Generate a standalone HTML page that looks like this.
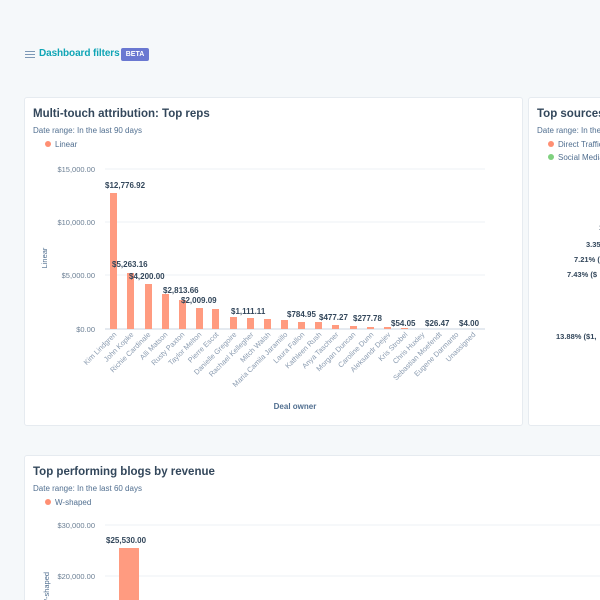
<!DOCTYPE html>
<html style="overflow:hidden;width:600px;height:600px"><head><style>
body{margin:0;width:600px;height:600px;overflow:hidden;background:#f5f8fa;font-family:"Liberation Sans",sans-serif;position:relative}
.card{position:absolute;background:#fff;border:1px solid #e6ebf0;border-radius:3px;overflow:hidden}
.t{position:absolute;white-space:nowrap}
</style></head><body>
<svg class="t" style="left:25px;top:50px" width="10" height="9" viewBox="0 0 10 9"><g stroke="#7c98b6" stroke-width="1"><line x1="0" y1="1.5" x2="10" y2="1.5"/><line x1="0" y1="4.5" x2="10" y2="4.5"/><line x1="0" y1="7.5" x2="10" y2="7.5"/></g></svg>
<div class="t" style="left:39px;top:48px;font-size:10px;font-weight:bold;color:#0fa5b5;letter-spacing:-0.1px">Dashboard filters</div>
<div class="t" style="left:121px;top:48px;width:28px;height:13px;background:#6a78d1;border-radius:2px;color:#fff;font-size:7px;font-weight:bold;text-align:center;line-height:13px">BETA</div>

<div class="card" style="left:24px;top:97px;width:497px;height:327px">
<svg width="497" height="327" style="position:absolute;left:0;top:0;font-family:'Liberation Sans',sans-serif">
<text x="8" y="19" font-size="11.5" font-weight="bold" fill="#33475b">Multi-touch attribution: Top reps</text>
<text x="8" y="35" font-size="8" fill="#516f90">Date range: In the last 90 days</text>
<circle cx="23" cy="46" r="3" fill="#ff8f73"/><text x="30" y="49" font-size="8" fill="#516f90">Linear</text>
<g font-size="7.5" fill="#6b7f94" text-anchor="end"><text x="70" y="74">$15,000.00</text><text x="70" y="127">$10,000.00</text><text x="70" y="180">$5,000.00</text><text x="70" y="234">$0.00</text></g>
<g stroke="#eef2f6"><line x1="80" y1="71" x2="460" y2="71"/><line x1="80" y1="124" x2="460" y2="124"/><line x1="80" y1="177" x2="460" y2="177"/></g>
<line x1="80" y1="231" x2="460" y2="231" stroke="#cbd6e2"/>
<text transform="translate(22,160) rotate(-90)" font-size="7.5" fill="#516f90" text-anchor="middle">Linear</text>
<g fill="#ff9b80">
<rect x="85" y="95" width="7" height="136"/><rect x="102" y="175" width="7" height="56"/><rect x="120" y="186" width="7" height="45"/><rect x="137" y="196" width="7" height="35"/><rect x="154" y="202" width="7" height="29"/><rect x="171" y="210" width="7" height="21"/><rect x="187" y="211" width="7" height="20"/><rect x="205" y="219" width="7" height="12"/><rect x="222" y="220" width="7" height="11"/><rect x="239" y="221" width="7" height="10"/><rect x="256" y="222" width="7" height="9"/><rect x="273" y="224" width="7" height="7"/><rect x="290" y="224" width="7" height="7"/><rect x="307" y="227" width="7" height="4"/><rect x="325" y="228" width="7" height="3"/><rect x="342" y="229" width="7" height="2"/><rect x="359" y="229" width="7" height="2"/><rect x="376" y="230" width="7" height="1"/>
</g>
<g font-size="8" font-weight="bold" fill="#33475b">
<text x="80" y="90">$12,776.92</text><text x="87" y="169">$5,263.16</text><text x="104" y="181">$4,200.00</text><text x="138" y="195">$2,813.66</text><text x="156" y="205">$2,009.09</text><text x="206" y="216">$1,111.11</text><text x="262" y="219">$784.95</text><text x="294" y="222">$477.27</text><text x="328" y="223">$277.78</text><text x="366" y="228">$54.05</text><text x="400" y="228">$26.47</text><text x="434" y="228">$4.00</text>
</g>
<g font-size="7.3" fill="#8a9bb0" text-anchor="end">
<text transform="translate(92,237) rotate(-45)">Kim Lindgren</text><text transform="translate(109,237) rotate(-45)">John Kopke</text><text transform="translate(126,237) rotate(-45)">Richie Cardinale</text><text transform="translate(143,237) rotate(-45)">Alli Matson</text><text transform="translate(160,237) rotate(-45)">Rusty Paxton</text><text transform="translate(177,237) rotate(-45)">Taylor Melton</text><text transform="translate(194,237) rotate(-45)">Pierre Escot</text><text transform="translate(212,237) rotate(-45)">Danielle Gregoire</text><text transform="translate(229,237) rotate(-45)">Rachael Kellegher</text><text transform="translate(246,237) rotate(-45)">Mitch Walsh</text><text transform="translate(263,237) rotate(-45)">Maria Camila Jaramillo</text><text transform="translate(280,237) rotate(-45)">Laura Fallon</text><text transform="translate(297,237) rotate(-45)">Kathleen Rush</text><text transform="translate(314,237) rotate(-45)">Anya Taschner</text><text transform="translate(331,237) rotate(-45)">Morgan Duncan</text><text transform="translate(349,237) rotate(-45)">Caroline Dunn</text><text transform="translate(366,237) rotate(-45)">Aleksandr Dejev</text><text transform="translate(383,237) rotate(-45)">Kris Strobel</text><text transform="translate(400,237) rotate(-45)">Chris Huxley</text><text transform="translate(417,237) rotate(-45)">Sebastian Moefendt</text><text transform="translate(434,237) rotate(-45)">Eugene Darmanto</text><text transform="translate(451,237) rotate(-45)">Unassigned</text>
</g>
<text x="270" y="311" font-size="8" font-weight="bold" fill="#516f90" text-anchor="middle">Deal owner</text>
</svg></div>

<div class="card" style="left:528px;top:97px;width:80px;height:327px">
<svg width="80" height="327" style="position:absolute;left:0;top:0;font-family:'Liberation Sans',sans-serif">
<text x="8" y="19" font-size="11.5" font-weight="bold" fill="#33475b">Top sources of revenue</text>
<text x="8" y="35" font-size="8" fill="#516f90">Date range: In the last</text>
<circle cx="22" cy="46" r="3" fill="#ff8f73"/><text x="29" y="49" font-size="8" fill="#516f90">Direct Traffic</text>
<circle cx="22" cy="59" r="3" fill="#7fd17f"/><text x="29" y="62" font-size="8" fill="#516f90">Social Media</text>
<g font-size="7.5" font-weight="bold" fill="#33475b"><text x="70" y="132">1</text><text x="57" y="149">3.35%</text><text x="45" y="164">7.21% (</text><text x="38" y="179">7.43% ($</text><text x="27" y="241">13.88% ($1,</text></g>
</svg></div>

<div class="card" style="left:24px;top:455px;width:580px;height:150px">
<svg width="580" height="150" style="position:absolute;left:0;top:0;font-family:'Liberation Sans',sans-serif">
<text x="8" y="19" font-size="11.5" font-weight="bold" fill="#33475b">Top performing blogs by revenue</text>
<text x="8" y="35" font-size="8" fill="#516f90">Date range: In the last 60 days</text>
<circle cx="23" cy="46" r="3" fill="#ff8f73"/><text x="30" y="49" font-size="8" fill="#516f90">W-shaped</text>
<g font-size="7.5" fill="#6b7f94" text-anchor="end"><text x="70" y="72">$30,000.00</text><text x="70" y="123">$20,000.00</text></g>
<g stroke="#eef2f6"><line x1="80" y1="69" x2="580" y2="69"/><line x1="80" y1="120" x2="580" y2="120"/></g>
<rect x="94" y="92" width="20" height="80" fill="#ff9b80"/>
<text x="81" y="87" font-size="8" font-weight="bold" fill="#33475b">$25,530.00</text>
<text transform="translate(24,150) rotate(-90)" font-size="7.5" fill="#516f90">W-shaped</text>
</svg></div>
</body></html>
